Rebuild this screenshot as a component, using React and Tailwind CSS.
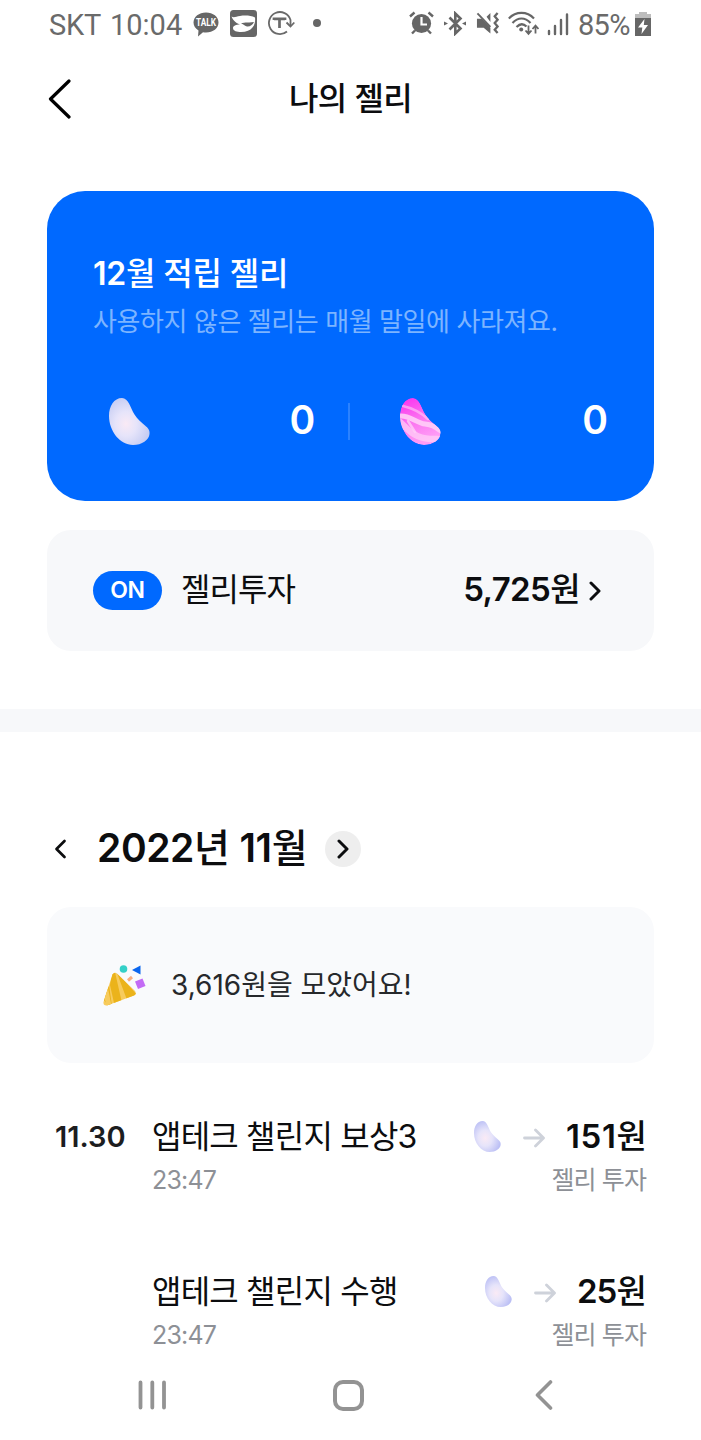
import React from 'react';

const history = [
  { id: 1, date: '11.30', title: '앱테크 챌린지 보상3', time: '23:47', amount: '151', type: '젤리 투자', tracking: 'tracking-[0.6px]' },
  { id: 2, date: '', title: '앱테크 챌린지 수행', time: '23:47', amount: '25', type: '젤리 투자', tracking: 'tracking-[-0.9px]' },
];

const BEAN = 'M13 0 C5 0 0 8 0 18 C0 33 11 47 24 47 C33 47 40 42 40.5 36 C41 32 39 30 36 27.500 C32 24 28.500 21 25.500 16.500 C21.500 10 19.500 0 13 0Z';

function Jelly({ id, className, edge = '#c6cdf3' }) {
  return (
    <svg viewBox="0 0 41 47" className={className}>
      <defs>
        <radialGradient id={id} cx="0.42" cy="0.55" r="0.58">
          <stop offset="0" stopColor="#faeaf5" />
          <stop offset="0.45" stopColor="#e6e4fa" />
          <stop offset="1" stopColor={edge} />
        </radialGradient>
      </defs>
      <path d={BEAN} fill={`url(#${id})`} />
    </svg>
  );
}

function PinkJelly({ className }) {
  return (
    <svg viewBox="0 0 41 47" className={className}>
      <defs>
        <clipPath id="bean"><path d={BEAN} /></clipPath>
        <linearGradient id="pink" x1="0" y1="0" x2="0.4" y2="1">
          <stop offset="0" stopColor="#fb2df0" />
          <stop offset="0.55" stopColor="#fb74f0" />
          <stop offset="1" stopColor="#ff9cf6" />
        </linearGradient>
      </defs>
      <g clipPath="url(#bean)" fill="none" stroke="#ffcdf7" strokeLinecap="round">
        <path d={BEAN} fill="url(#pink)" stroke="none" />
        <path d="M3 8 C12 10 19 13 28 21" strokeWidth="2.600" strokeOpacity="0.6" />
        <path d="M0 18 C9 17 17 25 25 26 S35 29 41 33" strokeWidth="5" strokeOpacity="0.9" />
        <path d="M0 24 C7 30 13 40 30 41 L38 41" strokeWidth="6.500" strokeOpacity="0.75" />
        <path d="M8 23 L15 34" strokeWidth="2.500" strokeOpacity="0.8" />
      </g>
    </svg>
  );
}

function Chevron({ d, box, width, className }) {
  return (
    <svg viewBox={box} fill="none" stroke="currentColor" strokeWidth={width} strokeLinecap="round" strokeLinejoin="round" className={className}>
      <path d={d} />
    </svg>
  );
}

function StatusBar() {
  return (
    <div className="flex h-12 shrink-0 items-center pl-[49px] pr-[50px] font-['Roboto',sans-serif] text-[29px] leading-none text-[#6a6a6a]">
      <span className="w-[53px] pt-[2px] tracking-[-0.2px]">SKT</span>
      <span className="ml-[8px] w-[74px] pt-[2px]">10:04</span>
      {/* Notification icons */}
      <svg viewBox="0 0 26 25" className="ml-[9px] h-[25px] w-[26px] shrink-0">
        <path d="M13 0.5 C20 0.5 25.5 4.800 25.500 10.500 S20 20.500 13 20.500 Q11.500 20.500 10 20.200 L5 24.500 L5.500 18.500 C2.300 16.500 0.500 13.700 0.500 10.500 C0.500 4.800 6 0.500 13 0.500Z" fill="#666" />
        <text x="13" y="14" textAnchor="middle" fontSize="10" fontWeight="700" textLength="20" lengthAdjust="spacingAndGlyphs" fill="#fff" fontFamily="Roboto">TALK</text>
      </svg>
      <svg viewBox="0 0 27 27" className="mb-[2px] ml-[11px] h-[27px] w-[27px] shrink-0">
        <rect width="27" height="27" rx="3.500" fill="#666" />
        <path d="M1.500 6.500 C4 8 6 6.500 10 6 C15 5 21 5.500 25 7.500 C26 15 22 22 11 22 C7 22 3 21 3 18 C3 16 6 14.500 10 14.500 C5 12.500 3 10 1.500 6.500Z" fill="#fff" />
        <path d="M11 13.500 C15 11.500 19 13 24 12 C22.500 15 20 16.800 17 16.500 C15 16 14 14.500 11 13.500Z" fill="#666" />
      </svg>
      <svg viewBox="0 0 28 25" fill="none" stroke="#6a6a6a" strokeWidth="1.800" className="mb-[2px] ml-[10px] h-[25px] w-[28px] shrink-0">
        <path d="M20 20.500 A11 11 0 1 1 23.500 9 L23.500 15" />
        <path d="M19.500 11.500 L23.500 15.500 L27.300 11.500" />
        <path d="M7 9 V7.800 H18 V9 M12.500 8 V17" strokeWidth="2.700" />
      </svg>
      <span className="mb-[2px] ml-[18px] h-2 w-2 shrink-0 rounded-full bg-[#666]" />

      <svg viewBox="0 0 25 24" className="mb-[2px] ml-auto h-6 w-[25px] shrink-0">
        <circle cx="12.500" cy="12.500" r="9.600" fill="#666" />
        <path d="M1 5.500 L5.500 1.500 M24 5.500 L19.500 1.500 M3 22.500 L6 19.500 M22 22.500 L19 19.500" stroke="#666" strokeWidth="2.400" />
        <path d="M12.500 6 V13.500 H18" fill="none" stroke="#fff" strokeWidth="2.200" />
      </svg>
      <svg viewBox="0 0 22 25" className="mb-[2px] ml-[10px] h-[25px] w-[22px] shrink-0" fill="none" stroke="#666">
        <path d="M5.500 6.500 L16.500 17.500 L11.300 22.500 V2.500 L16.500 7.500 L5.500 18.500" strokeWidth="2.600" />
        <path d="M0 10.500 L4 12.500 L0 14.500Z M22 10.500 L18 12.500 L22 14.500Z" fill="#666" stroke="none" />
      </svg>
      <svg viewBox="0 0 25 25" className="mb-[2px] ml-[10px] h-[25px] w-[24px] shrink-0" fill="#666">
        <path d="M1 7.500 H6 L15 17 V23 L8 17 H1Z M11 5.500 L15 1.500 V11Z" />
        <path d="M1.500 2 L15 16" stroke="#666" strokeWidth="2" />
        <path d="M22.500 1.500 L19.500 5 L22.500 8.500 L19.500 12 L22.500 15.500 L19.500 19 L22.500 22.500" fill="none" stroke="#666" strokeWidth="2.400" />
      </svg>
      <svg viewBox="0 0 31 25" className="mb-[2px] ml-[8px] h-[25px] w-[31px] shrink-0" fill="none" stroke="#666" strokeWidth="2.200">
        <path d="M0.800 7.500 C8 0 19 0 26 7.500 M4.500 12 C10 6 17 6 22.500 12 M8.500 16 C12 12.500 15.500 12.500 18.500 15.500" />
        <circle cx="13.200" cy="18.500" r="2" fill="#666" stroke="none" />
        <path d="M20.500 14.500 V22.500 M17.500 19.500 L20.500 22.800 L23.500 19.500 M27.500 22.500 V15 M24.500 18 L27.500 14.700 L30.500 18" strokeWidth="1.800" />
      </svg>
      <svg viewBox="0 0 22 24" className="ml-[8px] h-6 w-[22px] shrink-0" fill="none" stroke="#666" strokeWidth="2.400" strokeLinecap="round">
        <path d="M2 19 V22 M8 14 V22 M14 8 V22 M20 2.500 V22" />
      </svg>
      <span className="ml-[9px] w-[53px] whitespace-nowrap pt-[2px] tracking-[-0.7px]">85%</span>
      <svg viewBox="0 0 16 24" className="mb-px ml-[4px] h-6 w-4 shrink-0">
        <path d="M4 0 H12 V2 H16 V7 H0 V2 H4Z" fill="#bdbdbd" />
        <path d="M0 6 H16 V24 H0Z" fill="#666" />
        <path d="M9.500 7 L3 15.500 H7.300 L6.500 22 L13 13 H8.800Z" fill="#fff" />
      </svg>
    </div>
  );
}

function Header() {
  return (
    <header className="flex h-[102px] shrink-0 items-center justify-between px-12">
      <Chevron box="0 0 24 40" d="M21 2 L2.500 20 L21 38" width="3.200" className="h-10 w-6 text-black" />
      <h1 className="text-[32px] font-medium tracking-[-0.7px] text-[#0c0d0f]">나의 젤리</h1>
      <span className="w-6" />
    </header>
  );
}

function JellyCard() {
  return (
    <section className="mx-[47px] mt-[41px] h-[310px] shrink-0 rounded-[38px] bg-[#0069ff] px-[46px] pt-[59px] text-white">
      <h2 className="h-12 text-[32px] font-medium leading-[48px] tracking-[-0.3px]">
        <span className="font-semibold">12</span>월 적립 젤리
      </h2>
      <p className="h-12 whitespace-nowrap text-[26px] leading-[48px] tracking-[-0.42px] text-[#7db4ff]">사용하지 않은 젤리는 매월 말일에 사라져요.</p>
      <div className="mt-[41px] flex h-[68px] items-center">
        <Jelly id="jelly-main" className="ml-[16px] h-[47px] w-[41px]" />
        <span className="ml-auto text-[39px] font-semibold leading-[66px] pb-[2px]">0</span>
        <span className="ml-[33px] h-[37px] w-[2px] bg-[#2b82ff]" />
        <PinkJelly className="ml-[50px] h-[47px] w-[41px]" />
        <span className="ml-[141px] text-[39px] font-semibold leading-[66px] pb-[2px]">0</span>
      </div>
    </section>
  );
}

function InvestRow() {
  return (
    <section className="mx-[47px] mt-[29px] flex h-[121px] shrink-0 items-center rounded-[24px] bg-[#f7f8fa] pl-[46px] pr-[53px] text-[#0c0d0f]">
      <span className="flex h-[39px] w-[69px] items-center justify-center rounded-full bg-[#0069ff] text-[23px] font-semibold tracking-[-0.4px] text-white">ON</span>
      <span className="ml-[19px] pb-[2px] text-[32px] tracking-[-0.9px]">젤리투자</span>
      <span className="ml-auto pb-[2px] text-[33px] font-medium tracking-[-0.6px]">
        <span className="font-semibold">5,725</span>원
      </span>
      <Chevron box="0 0 12 20" d="M2 2 L10 10 L2 18" width="3" className="ml-[9px] h-5 w-3" />
    </section>
  );
}

function Party() {
  return (
    <svg viewBox="0 0 43 41" className="h-[41px] w-[43px]">
      <defs>
        <clipPath id="cone"><path d="M9.500 9.500 Q11.500 6.500 14.500 9 L32 26 Q34 29 31 30.500 L4 40.500 Q0 41 0.500 37Z" /></clipPath>
      </defs>
      <g clipPath="url(#cone)">
        <rect width="43" height="41" fill="#f7cb5d" />
        <path d="M0 34 L6 20 L9 41 H6Z M9 8 L12 7 L19 38 H11 L7 20Z M14 8 L20 14 L34 30 L24 35Z" fill="#ebb31b" />
        <path d="M5 23 L8.500 41 H4 L1 32Z" fill="#f7cb5d" />
      </g>
      <circle cx="20.500" cy="4" r="3.800" fill="#35d0c8" />
      <path d="M29 5 L37.500 0.500 V9.500Z" fill="#0b66ee" />
      <path d="M25 15.500 L29 12" stroke="#f9ad80" strokeWidth="3" />
      <path d="M32 16.500 L39.500 13.500 L42.500 21 L35 24Z" fill="#c36bf5" />
    </svg>
  );
}

function HistoryItem({ item }) {
  return (
    <li className="flex h-[155px] pl-[55px] pr-[55px]">
      <span className="w-[97px] shrink-0 text-[29px] font-semibold leading-[49px] text-[#1c1d1f]">{item.date}</span>
      <div className="flex-1">
        <p className="h-12 whitespace-nowrap text-[32px] leading-[49px] tracking-[-0.8px] text-[#0c0d0f]">{item.title}</p>
        <p className="text-[25px] leading-[40px] tracking-[-0.8px] text-[#8d9096]">{item.time}</p>
      </div>
      <div className="flex flex-col items-end whitespace-nowrap">
        <div className="flex h-12 items-center">
          <Jelly id={`jelly-${item.id}`} edge="#bcc0f5" className="h-[31px] w-[27px]" />
          <svg viewBox="0 0 22 20" fill="none" stroke="#ced2da" strokeWidth="2.800" strokeLinecap="round" strokeLinejoin="round" className="ml-[22px] mt-1 h-5 w-[22px]">
            <path d="M1.500 10 H20 M12.500 2 L20.500 10 L12.500 18" />
          </svg>
          <span className="ml-[21px] text-[33px] font-medium leading-[48px] tracking-[-0.8px] text-[#0c0d0f]">
            <span className={`font-semibold ${item.tracking}`}>{item.amount}</span>원
          </span>
        </div>
        <p className="text-[25px] leading-[40px] tracking-[-0.9px] text-[#8d9096]">{item.type}</p>
      </div>
    </li>
  );
}

function NavBar() {
  return (
    <nav className="flex h-[85px] shrink-0 items-center bg-white pb-[5px] pl-[138px] text-[#939393]">
      <svg viewBox="0 0 28 30" stroke="currentColor" strokeWidth="3.800" strokeLinecap="round" className="h-[30px] w-7">
        <path d="M2.500 2.500 V27.500 M14.300 2.500 V27.500 M26 2.500 V27.500" />
      </svg>
      <span className="ml-[167px] h-[31px] w-[31px] rounded-[10px] border-[4px] border-current" />
      <Chevron box="0 0 18 30" d="M15.500 2 L2.500 15 L15.500 28" width="3.600" className="ml-[171px] h-[30px] w-[18px]" />
    </nav>
  );
}

export default function App() {
  return (
    <div className="flex h-[1440px] w-[701px] flex-col overflow-hidden bg-white font-['Inter','Noto_Sans_CJK_KR',sans-serif]">
      <StatusBar />
      <Header />
      <JellyCard />
      <InvestRow />
      <div className="mt-[58px] h-[23px] shrink-0 bg-[#f7f8fa]" />

      {/* Month picker */}
      <div className="mt-[87px] flex h-[60px] shrink-0 items-center pl-[54px] text-[#0c0d0f]">
        <Chevron box="0 0 13 20" d="M10.500 2 L2.500 10 L10.500 18" width="2.700" className="h-5 w-[13px]" />
        <span className="ml-[30px] w-[209px] whitespace-nowrap pb-[2px] text-[39px] font-medium tracking-[-0.4px]">
          <span className="font-semibold">2022</span>년 <span className="font-semibold">11</span>월
        </span>
        <span className="ml-[19px] flex h-9 w-9 items-center justify-center rounded-full bg-[#eeeeee]">
          <Chevron box="0 0 12 20" d="M2 2 L10 10 L2 18" width="3" className="h-5 w-3" />
        </span>
      </div>

      <section className="mx-[47px] mt-[28px] flex h-[156px] shrink-0 items-center rounded-[24px] bg-[#f9fafc] pl-14">
        <Party />
        <span className="ml-[25px] text-[28px] text-[#26282b]">3,616원을 모았어요!</span>
      </section>

      <ul className="mt-[49px] h-[243px] shrink-0 overflow-hidden">
        {history.map(item => <HistoryItem key={item.id} item={item} />)}
      </ul>
      <NavBar />
    </div>
  );
}
